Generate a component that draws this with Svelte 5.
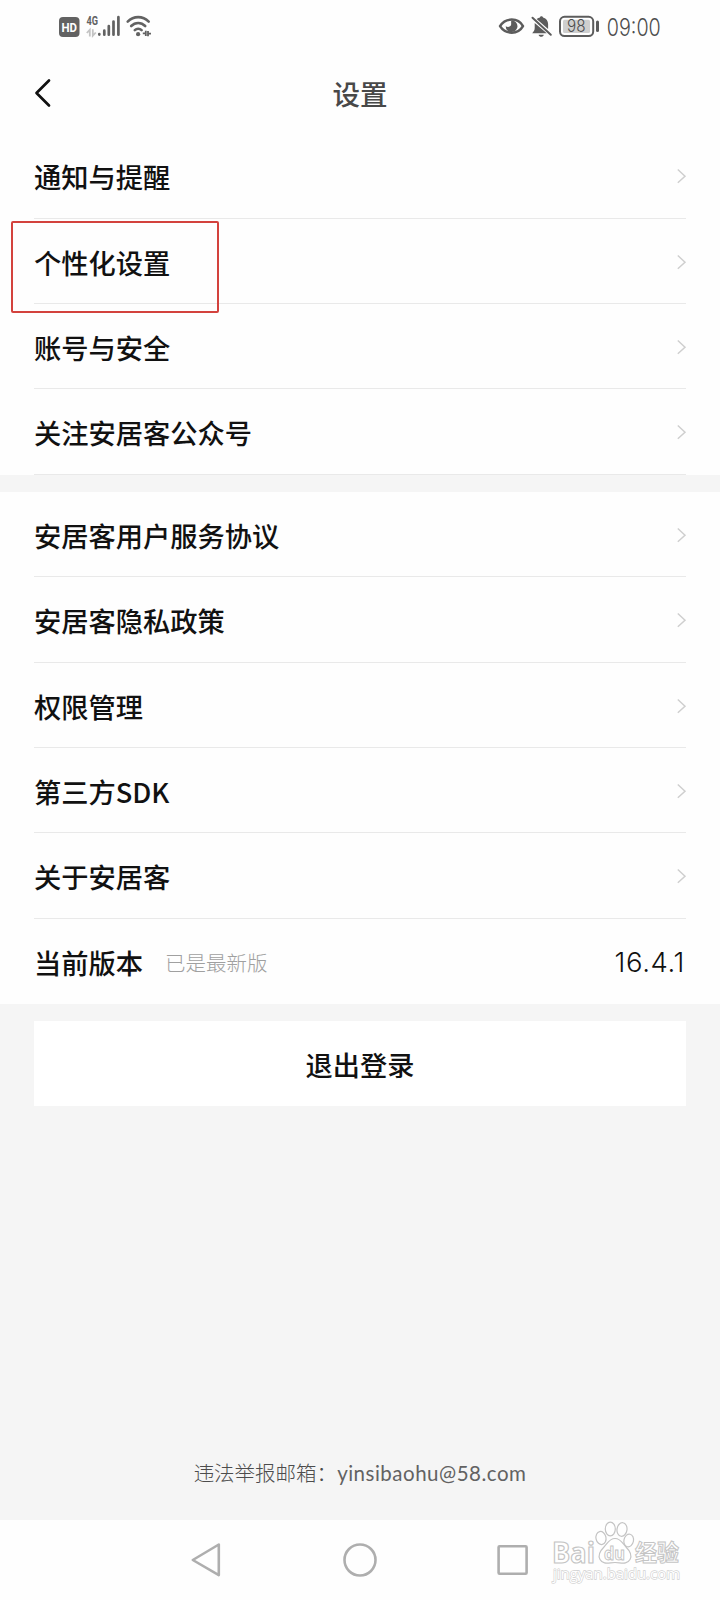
<script lang="ts">
  interface Item {
    label: string;
    marked?: boolean;
  }

  const general: Item[] = [
    { label: "通知与提醒" },
    { label: "个性化设置", marked: true },
    { label: "账号与安全" },
    { label: "关注安居客公众号" }
  ];

  const about: Item[] = [
    { label: "安居客用户服务协议" },
    { label: "安居客隐私政策" },
    { label: "权限管理" },
    { label: "第三方SDK" },
    { label: "关于安居客" }
  ];

  const version = "16.4.1";
</script>

{#snippet row(item: Item)}
  <li class="row">
    <span class="label">{item.label}</span>
    <svg class="chevron" width="11" height="16" viewBox="0 0 11 16">
      <path d="M1.8 1.5 9 8.2 1.8 14.8" />
    </svg>
    {#if item.marked}
      <span class="mark"></span>
    {/if}
  </li>
{/snippet}

<div class="screen">
  <div class="status">
    <svg class="status-left" width="100" height="30" viewBox="56 12 100 30">
      <rect x="59" y="17" width="20.5" height="20" rx="4" fill="#626262" />
      <text x="61.5" y="31.8" class="hd" textLength="15.5" lengthAdjust="spacingAndGlyphs">HD</text>
      <text x="86.5" y="25" class="net" textLength="11.5" lengthAdjust="spacingAndGlyphs">4G</text>
      <g stroke="#c4c4c4" stroke-width="1.8" fill="none">
        <path d="M86.8 33l3-3.2v6.800M95.800 32.500l-3 3.200v-6.500" />
      </g>
      <g stroke="#626262" stroke-width="2.7" stroke-linecap="round">
        <path d="M99.3 34.2v.4M104.3 30.7v4M108.8 26.2v8.5M113.5 21.5v13.2M118.4 17.2v17.5" />
      </g>
      <g stroke="#626262" stroke-width="2.6" stroke-linecap="round" fill="none">
        <path d="M127.7 21.6c6-6 15-6 21 0M131.2 26c4-4 10-4 14 0M134.8 30.2c2-2 4.8-2 6.8 0" />
      </g>
      <circle cx="138.1" cy="34.2" r="2.100" fill="#626262" />
      <g stroke="#626262" stroke-width="1.8" fill="none">
        <path d="M142.800 33.300h3v-2.500v5.200M151 33.700h-3v2.500v-5.200" />
      </g>
    </svg>
    <svg class="status-right" width="180" height="36" viewBox="496 12 180 36">
      <path d="M500 26.1c5.6-8.7 18-8.7 23 0c-5 8.7-17.4 8.7-23 0z" fill="none" stroke="#5c5c5c" stroke-width="2.5" stroke-linejoin="round" />
      <path d="M511.5 20.3a5.9 5.9 0 1 1-5.8 5.900c2.2 1.5 4.9.5 5.4-1.5c.3-1.500-.4-2.800.4-4.400z" fill="#5c5c5c" />
      <path d="M532.2 33.2c1.3-1.7 2.5-2.6 2.5-5.2v-5l12 10.200zM536.6 19.1c1.3-1.2 2.4-1.3 3.300-1.700c.4-1.600 2.6-1.600 3.200 0c3.400 1 5 3.500 5 6.700v4.800zM538.600 34.700h5.200c-.6 2.700-4.600 2.700-5.200 0z" fill="#5c5c5c" />
      <path d="M532.5 17.7l18.300 17" stroke="#5c5c5c" stroke-width="2" stroke-linecap="round" />
      <rect x="560" y="16.8" width="33.2" height="19.2" rx="4.5" fill="#fff" stroke="#5c5c5c" stroke-width="2" />
      <rect x="563" y="19.8" width="27" height="13.2" rx="1.5" fill="#cfcfcf" />
      <path d="M597.5 22v8.5" stroke="#5c5c5c" stroke-width="3" stroke-linecap="round" />
      <text x="567" y="32.2" class="battery" textLength="18.5" lengthAdjust="spacingAndGlyphs">98</text>
      <text x="606.8" y="35.5" class="clock" textLength="54" lengthAdjust="spacingAndGlyphs">09:00</text>
    </svg>
  </div>

  <header>
    <svg class="back" width="20" height="30" viewBox="0 0 20 30">
      <path d="M16 2.5 3.5 15 16 27.5" />
    </svg>
    <h1>设置</h1>
  </header>

  <ul class="group">
    {#each general as item}
      {@render row(item)}
    {/each}
  </ul>

  <ul class="group">
    {#each about as item}
      {@render row(item)}
    {/each}
    <li class="row version">
      <span class="label">当前版本</span>
      <span class="hint">已是最新版</span>
      <span class="number">{version}</span>
    </li>
  </ul>

  <button class="logout">退出登录</button>

  <p class="contact">违法举报邮箱：<span>yinsibaohu@58.com</span></p>

  <nav>
    <svg width="720" height="80" viewBox="0 1520 720 80">
      <g fill="none" stroke="#aeaeae" stroke-width="2.6" stroke-linejoin="round">
        <path d="M192.8 1560 218.8 1544.5v30.6z" />
        <circle cx="360" cy="1560" r="15.5" />
        <rect x="498.6" y="1546.2" width="28" height="27.6" rx="1" />
      </g>
    </svg>
    <svg class="watermark" width="150" height="76" viewBox="542 1518 150 76">
      <g fill="#fff" stroke="#c4c4c4" stroke-width="1.2">
        <text x="552" y="1562.5" class="brand" textLength="43" lengthAdjust="spacingAndGlyphs">Bai</text>
        <ellipse cx="601" cy="1538" rx="5" ry="6.6" transform="rotate(-12 601 1538)" />
        <ellipse cx="610.3" cy="1529" rx="5" ry="6.8" />
        <ellipse cx="622" cy="1529.5" rx="5" ry="6.8" transform="rotate(8 622 1529.5)" />
        <ellipse cx="628.7" cy="1540.5" rx="4.8" ry="6.4" transform="rotate(12 628.7 1540.5)" />
        <path d="M615 1538.5c6 0 7.500 5 11 8.5c4.500 4.500 6.500 8 4 12.500c-3 5.500-9 3-15 3s-12 2.500-15-3c-2.500-4.500-.5-8 4-12.500c3.500-3.500 5-8.500 11-8.500z" />
        <text x="604" y="1560" class="du" textLength="21" lengthAdjust="spacingAndGlyphs">du</text>
        <text x="635" y="1561" class="cn" textLength="44" lengthAdjust="spacingAndGlyphs">经验</text>
      </g>
      <text x="553" y="1579" class="site" textLength="127" lengthAdjust="spacingAndGlyphs">jingyan.baidu.com</text>
    </svg>
  </nav>
</div>

<style>
  :global(body) {
    margin: 0;
    background: #f5f5f5;
  }

  .screen {
    display: flex;
    flex-direction: column;
    width: 720px;
    height: 1600px;
    overflow: hidden;
    background: #f5f5f5;
    color: #111;
    font-family: "Noto Sans CJK SC", sans-serif;
  }

  svg {
    display: block;
    flex: none;
  }

  .status {
    display: flex;
    justify-content: space-between;
    box-sizing: border-box;
    height: 53px;
    padding: 12px 44px 0 56px;
    background: #fefefe;
  }

  .hd,
  .net {
    font: 700 13.5px Roboto, sans-serif;
    fill: #fff;
  }

  .net {
    font-size: 13px;
    fill: #626262;
  }

  .battery,
  .clock {
    font: 300 17.5px Inter, sans-serif;
    fill: #4c4c4c;
  }

  .clock {
    font-size: 23.5px;
  }

  header {
    display: grid;
    grid-template-columns: 20px 1fr 20px;
    align-items: center;
    box-sizing: border-box;
    height: 80.3px;
    padding: 0 33px;
    background: #fefefe;
  }

  .back path {
    fill: none;
    stroke: #111;
    stroke-width: 2.7;
    stroke-linecap: round;
    stroke-linejoin: round;
  }

  h1 {
    margin: 0;
    color: #484848;
    font-size: 27.5px;
    font-weight: 500;
    line-height: 40px;
    text-align: center;
  }

  .group {
    margin: 0 0 17.3px;
    padding: 0;
    background: #fefefe;
    list-style: none;
  }

  .row {
    position: relative;
    display: flex;
    align-items: center;
    box-sizing: border-box;
    height: 85.33px;
    margin: 0 34px;
    padding-top: 2px;
    border-bottom: 1px solid #e9e9e9;
  }

  .version {
    border-bottom: 0;
  }

  .label {
    font-size: 27.25px;
    font-weight: 500;
    line-height: 40px;
  }

  .chevron {
    margin-left: auto;
    margin-right: -1px;
  }

  .chevron path {
    fill: none;
    stroke: #cfcfcf;
    stroke-width: 1.5;
  }

  .mark {
    position: absolute;
    top: 2px;
    left: -23px;
    box-sizing: border-box;
    width: 208px;
    height: 92px;
    border: 2px solid #d3423d;
    border-radius: 2px;
    z-index: 1;
  }

  .hint {
    margin-left: 22px;
    color: #a0a0a0;
    font-size: 20.5px;
    font-weight: 300;
  }

  .number {
    margin-left: auto;
    margin-right: 1px;
    font-family: Inter, sans-serif;
    font-size: 27.5px;
    font-weight: 300;
    letter-spacing: 0.6px;
  }

  .logout {
    height: 85.3px;
    margin: 0 34px;
    padding: 0;
    border: 0;
    background: #fff;
    color: #111;
    font: 500 27.2px "Noto Sans CJK SC", sans-serif;
  }

  .contact {
    margin: auto 0 31px;
    color: #4c4c4c;
    font-size: 20.5px;
    font-weight: 300;
    line-height: 32px;
    text-align: center;
  }

  .contact span {
    color: #626262;
    font-family: Lato, sans-serif;
    font-weight: 400;
    letter-spacing: 0.5px;
  }

  nav {
    position: relative;
    height: 80px;
    background: #fefefe;
  }

  .watermark {
    position: absolute;
    top: -2px;
    left: 542px;
  }

  .brand {
    font: 700 29px "Open Sans", sans-serif;
  }

  .du {
    font: 700 18px "Open Sans", sans-serif;
    stroke-width: 1;
  }

  .cn {
    font: 700 23px "Noto Sans CJK SC", sans-serif;
    stroke-width: 1;
  }

  .site {
    font: 400 15px "Open Sans", sans-serif;
    fill: #fff;
    stroke: #d2d2d2;
    stroke-width: 1.3;
    paint-order: stroke;
  }
</style>
